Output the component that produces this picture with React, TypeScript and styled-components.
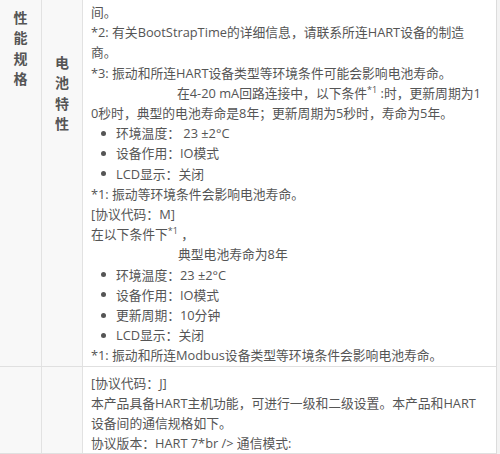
import React from "react";
import styled, { createGlobalStyle } from "styled-components";

const Global = createGlobalStyle`
  html, body { margin: 0; padding: 0; background: #f3f3f3; }
  body { font-family: "Open Sans", "Noto Sans CJK SC", sans-serif; }
`;

const Table = styled.div`
  width: 496px;
  height: 454px;
  overflow: hidden;
  background: #ffffff;
  border-right: 1px solid #dcdcdc;
`;

const Row = styled.div`
  display: grid;
  grid-template-columns: 42px 41px 1fr;
  border-bottom: 1px solid #e0e0e0;
`;

const HeadCell = styled.div<{ $top: number }>`
  background: #f8f8f8;
  border-right: 1px solid #e2e2e2;
  padding-top: ${(p) => p.$top}px;
  display: flex;
  flex-direction: column;
  align-items: center;
  font-family: "Noto Sans CJK SC", sans-serif;
  font-weight: bold;
  font-size: 14px;
  line-height: 20.3px;
  color: #555555;
`;

const Char = styled.span`
  display: block;
`;

const BodyCell = styled.div<{ $top: number }>`
  padding: ${(p) => p.$top}px 6px 0 8px;
  font-size: 12.8px;
  line-height: 20.2px;
  color: #555555;
`;

const Line = styled.div<{ $indent?: number }>`
  white-space: nowrap;
  padding-left: ${(p) => p.$indent ?? 0}px;
`;

const Bullet = styled.div`
  display: flex;
  align-items: center;
  white-space: nowrap;
  &::before {
    content: "";
    width: 5px;
    height: 5px;
    border-radius: 50%;
    background: #555555;
    margin: 0 10px 0 10px;
    flex: none;
  }
`;

const Sup = styled.sup`
  font-size: 9px;
  line-height: 0;
  vertical-align: 5px;
`;

const Label = ({ text, top }: { text: string; top: number }) => (
  <HeadCell $top={top}>
    {text.split("").map((c, i) => (
      <Char key={i}>{c}</Char>
    ))}
  </HeadCell>
);

export default function App() {
  return (
    <>
      <Global />
      <Table>
        <Row>
          <Label text="性能规格" top={7} />
          <Label text="电池特性" top={52} />
          <BodyCell $top={2}>
            <Line>间。</Line>
            <Line>*2: 有关BootStrapTime的详细信息，请联系所连HART设备的制造</Line>
            <Line>商。</Line>
            <Line>*3: 振动和所连HART设备类型等环境条件可能会影响电池寿命。</Line>
            <Line $indent={86}>
              在4-20 mA回路连接中，以下条件<Sup>*1</Sup> :时，更新周期为1
            </Line>
            <Line>0秒时，典型的电池寿命是8年；更新周期为5秒时，寿命为5年。</Line>
            <Bullet>环境温度： 23 ±2°C</Bullet>
            <Bullet>设备作用：IO模式</Bullet>
            <Bullet>LCD显示：关闭</Bullet>
            <Line>*1: 振动等环境条件会影响电池寿命。</Line>
            <Line>[协议代码：M]</Line>
            <Line>
              在以下条件下<Sup>*1</Sup> ，
            </Line>
            <Line $indent={87}>典型电池寿命为8年</Line>
            <Bullet>环境温度：23 ±2°C</Bullet>
            <Bullet>设备作用：IO模式</Bullet>
            <Bullet>更新周期：10分钟</Bullet>
            <Bullet>LCD显示：关闭</Bullet>
            <Line>*1: 振动和所连Modbus设备类型等环境条件会影响电池寿命。</Line>
          </BodyCell>
        </Row>
        <Row>
          <HeadCell $top={0} />
          <HeadCell $top={0} />
          <BodyCell $top={6}>
            <Line>[协议代码：J]</Line>
            <Line>本产品具备HART主机功能，可进行一级和二级设置。本产品和HART</Line>
            <Line>设备间的通信规格如下。</Line>
            <Line>协议版本：HART 7*br /&gt; 通信模式:</Line>
          </BodyCell>
        </Row>
      </Table>
    </>
  );
}
